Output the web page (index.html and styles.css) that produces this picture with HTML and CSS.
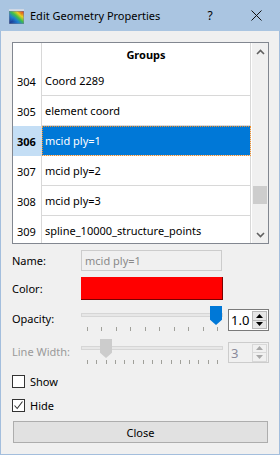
FILE: index.html
```html
<!DOCTYPE html>
<html>
<head>
<meta charset="utf-8">
<link rel="stylesheet" href="styles.css">
</head>
<body>
<div class="window">
  <div class="titlebar">
    <svg class="appicon" width="15" height="15" viewBox="0 0 15 15">
      <defs>
        <linearGradient id="g1" x1="0" y1="1" x2="1" y2="0">
          <stop offset="0" stop-color="#1c2f8a"/>
          <stop offset="0.35" stop-color="#1f7fd0"/>
          <stop offset="0.55" stop-color="#3fbf4a"/>
          <stop offset="0.75" stop-color="#e8d020"/>
          <stop offset="1" stop-color="#e0301c"/>
        </linearGradient>
      </defs>
      <rect x="0" y="0" width="15" height="15" fill="#6d7f9a"/>
      <rect x="0" y="0" width="15" height="2" fill="#d0d8e4"/>
      <rect x="0.5" y="2.5" width="14" height="12" fill="url(#g1)"/>
      <path d="M2 13 L6 5 L10 3 L13 4 L13 13 Z" fill="url(#g1)" opacity="0.7"/>
    </svg>
    <span class="title">Edit Geometry Properties</span>
    <span class="help">?</span>
    <svg class="close-x" width="11" height="11" viewBox="0 0 11 11">
      <path d="M0.5 0.5 L10.5 10.5 M10.5 0.5 L0.5 10.5" stroke="#111" stroke-width="1"/>
    </svg>
  </div>

  <div class="content">
    <div class="table">
      <div class="table-main">
        <div class="row header-row">
          <div class="vh"></div>
          <div class="cell head">Groups</div>
        </div>
        <div class="row"><div class="vh">304</div><div class="cell">Coord 2289</div></div>
        <div class="row"><div class="vh">305</div><div class="cell">element coord</div></div>
        <div class="row selected"><div class="vh">306</div><div class="cell">mcid ply=1</div></div>
        <div class="row"><div class="vh">307</div><div class="cell">mcid ply=2</div></div>
        <div class="row"><div class="vh">308</div><div class="cell">mcid ply=3</div></div>
        <div class="row"><div class="vh">309</div><div class="cell">spline_10000_structure_points</div></div>
      </div>
      <div class="scrollbar">
        <div class="sb-btn">
          <svg width="9" height="6" viewBox="0 0 9 6"><path d="M1 5 L4.5 1.5 L8 5" fill="none" stroke="#606060" stroke-width="1.6"/></svg>
        </div>
        <div class="sb-track">
          <div class="sb-thumb" style="margin-top:126px"></div>
        </div>
        <div class="sb-btn">
          <svg width="9" height="6" viewBox="0 0 9 6"><path d="M1 1 L4.5 4.5 L8 1" fill="none" stroke="#606060" stroke-width="1.6"/></svg>
        </div>
      </div>
    </div>

    <div class="form">
      <div class="frow name-row">
        <label class="lbl">Name:</label>
        <div class="input disabled">mcid ply=1</div>
      </div>
      <div class="frow color-row">
        <label class="lbl">Color:</label>
        <div class="colorbox"></div>
      </div>
      <div class="frow slider-row opacity-row">
        <label class="lbl">Opacity:</label>
        <div class="slider">
          <div class="groove"></div>
          <div class="ticks">
            <i></i><i></i><i></i><i></i><i></i><i></i><i></i><i></i><i></i><i></i>
          </div>
          <div class="handle active" style="left:129px"></div>
        </div>
        <div class="spin">
          <span class="spin-val">1.0</span>
          <div class="spin-btns">
            <div class="sbtn"><svg width="7" height="4" viewBox="0 0 7 4"><path d="M0 4 L3.5 0 L7 4 Z" fill="#000"/></svg></div>
            <div class="sbtn"><svg width="7" height="4" viewBox="0 0 7 4"><path d="M0 0 L3.5 4 L7 0 Z" fill="#000"/></svg></div>
          </div>
        </div>
      </div>
      <div class="frow slider-row lw-row">
        <label class="lbl dim">Line Width:</label>
        <div class="slider">
          <div class="groove"></div>
          <div class="ticks">
            <i></i><i></i><i></i><i></i><i></i><i></i><i></i><i></i><i></i><i></i><i></i><i></i><i></i><i></i><i></i>
          </div>
          <div class="handle off" style="left:19px"></div>
        </div>
        <div class="spin disabled">
          <span class="spin-val">3</span>
          <div class="spin-btns">
            <div class="sbtn"><svg width="7" height="4" viewBox="0 0 7 4"><path d="M0 4 L3.5 0 L7 4 Z" fill="#a8a8a8"/></svg></div>
            <div class="sbtn"><svg width="7" height="4" viewBox="0 0 7 4"><path d="M0 0 L3.5 4 L7 0 Z" fill="#a8a8a8"/></svg></div>
          </div>
        </div>
      </div>
      <div class="check-row show-row">
        <span class="cbox"></span><span>Show</span>
      </div>
      <div class="check-row">
        <span class="cbox"><svg width="11" height="11" viewBox="0 0 11 11"><path d="M1.5 5.5 L4.2 8.5 L9.5 1.5" fill="none" stroke="#333" stroke-width="1.1"/></svg></span><span>Hide</span>
      </div>
      <div class="button">Close</div>
    </div>
  </div>
</div>
</body>
</html>
```

FILE: styles.css
```css
* { box-sizing: border-box; }
html, body { margin: 0; padding: 0; }
body {
  font-family: "Noto Sans", "Open Sans", sans-serif;
  font-size: 11px;
  color: #000;
  background: #f0f0f0;
}
.window {
  width: 280px;
  height: 455px;
  border: 1px solid #a3bedd;
  border-top: 0;
  background: #f0f0f0;
  display: flex;
  flex-direction: column;
}
.titlebar {
  height: 31px;
  background: #aac5e1;
  display: flex;
  align-items: center;
  margin: 0 -1px;
  padding-left: 9px;
}
.appicon { margin-top: 1px; }
.title { margin-left: 6px; font-size: 11px; color: #000; }
.help { margin-left: auto; margin-right: 0; font-size: 12px; width: 14px; text-align: center; }
.close-x { margin-left: 34px; margin-right: 18px; }

.content {
  padding: 11px 10px 0 11px;
  display: flex;
  flex-direction: column;
}
.table {
  height: 202px;
  border: 1px solid #828790;
  background: #fff;
  display: flex;
}
.table-main {
  flex: 1;
  display: flex;
  flex-direction: column;
  overflow: hidden;
}
.row {
  display: flex;
  height: 30px;
  flex: none;
}
.header-row { height: 23px; }
.vh {
  width: 29px;
  border-right: 1px solid #d8d8d8;
  padding-left: 4px;
  display: flex;
  align-items: center;
  flex: none;
}
.cell {
  flex: 1;
  border-bottom: 1px solid #d8d8d8;
  border-right: 1px solid #d8d8d8;
  padding-left: 3px;
  display: flex;
  align-items: center;
  white-space: nowrap;
}
.header-row .cell {
  border-bottom: 0;
  justify-content: center;
  font-weight: bold;
  padding-left: 0;
  padding-bottom: 1px;
}
.selected .vh { background: #c4def5; font-weight: bold; }
.selected .cell {
  background: #0078d7;
  color: #fff;
  outline: 1px dotted #f0902c;
  outline-offset: -1px;
}
.scrollbar {
  width: 17px;
  background: #f0f0f0;
  display: flex;
  flex-direction: column;
  border-left: 1px solid #fff;
}
.sb-btn {
  height: 17px;
  display: flex;
  align-items: center;
  justify-content: center;
}
.sb-track { flex: 1; padding: 0 1px; }
.sb-thumb { height: 18px; background: #cdcdcd; }

.form { display: flex; flex-direction: column; }
.frow { display: flex; align-items: center; }
.lbl { width: 69px; flex: none; }
.dim { color: #9a9a9a; }
.name-row { margin-top: 6px; height: 21px; }
.input {
  width: 141px;
  height: 21px;
  border: 1px solid #cccccc;
  padding-left: 3px;
  display: flex;
  align-items: center;
}
.input.disabled { color: #8a8a8a; background: #f0f0f0; }
.color-row { margin-top: 6px; height: 23px; }
.colorbox {
  width: 142px;
  height: 23px;
  background: #ff0000;
  border-right: 1px solid #7a0000;
  border-bottom: 1px solid #7a0000;
}
.slider-row { height: 25px; align-items: flex-start; }
.slider-row .lbl { align-self: center; }
.opacity-row { margin-top: 6px; }
.lw-row { margin-top: 8px; }
.slider {
  position: relative;
  width: 142px;
  height: 25px;
  flex: none;
}
.groove {
  margin-top: 7px;
  height: 4px;
  border: 1px solid #d6d6d6;
  background: #e7e7e7;
}
.ticks {
  margin-top: 10px;
  padding: 0 5px 0 6px;
  display: flex;
  justify-content: space-between;
}
.ticks i {
  display: block;
  width: 1px;
  height: 4px;
  background: #a0a09a;
}
.handle {
  position: absolute;
  top: 0;
  width: 12px;
  height: 19px;
  clip-path: polygon(0 0, 100% 0, 100% 72%, 50% 100%, 0 72%);
}
.handle.active { background: #0078d7; }
.handle.off { background: #cccccc; }
.spin {
  margin-left: 5px;
  margin-top: 3px;
  width: 41px;
  height: 22px;
  border: 1px solid #7a7a7a;
  background: #fff;
  display: flex;
  align-items: center;
  padding-left: 2px;
}
.spin-val { flex: 1; font-size: 13px; }
.spin-btns {
  width: 15px;
  height: 18px;
  margin-right: 1px;
  display: flex;
  flex-direction: column;
}
.sbtn {
  flex: 1;
  background: #e6e6e6;
  border: 1px solid #b8b8b8;
  display: flex;
  align-items: center;
  justify-content: center;
}
.sbtn + .sbtn { border-top: 0; }
.spin.disabled { border-color: #cccccc; background: #f0f0f0; margin-top: 3px; height: 21px; }
.spin.disabled .spin-val { color: #8a8a9a; }
.spin.disabled .sbtn { background: #f0f0f0; border-color: #d8d8d8; }

.check-row {
  display: flex;
  align-items: center;
  height: 19px;
  gap: 5px;
  margin-top: 5px;
}
.show-row { margin-top: 8px; }
.cbox {
  width: 13px;
  height: 13px;
  border: 1px solid #333;
  background: #fff;
  display: flex;
  align-items: center;
  justify-content: center;
}
.button {
  margin: 6px 1px 0 1px;
  height: 22px;
  border: 1px solid #adadad;
  background: #e1e1e1;
  display: flex;
  align-items: center;
  justify-content: center;
}
```
